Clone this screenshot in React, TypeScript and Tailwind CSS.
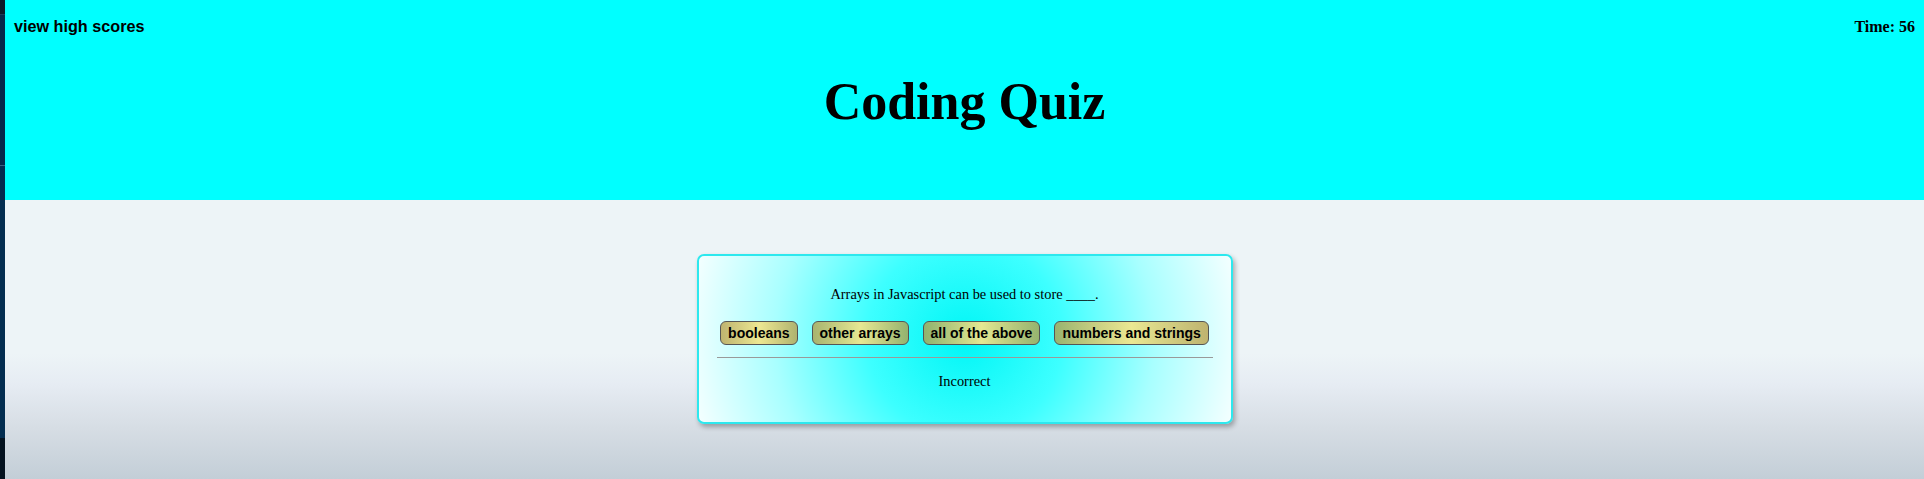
const answers = ['booleans', 'other arrays', 'all of the above', 'numbers and strings'];

export default function App() {
  return (
    <div className="flex min-h-screen w-full">
      {/* left edge of the neighbouring window */}
      <div className="flex w-[5px] shrink-0 flex-col">
        <div className="h-[14px] bg-[#0c1a29]"></div>
        <div className="h-px bg-[#1f3b57]"></div>
        <div className="h-[150px] bg-[#06294a]"></div>
        <div className="h-px bg-[#3b6182]"></div>
        <div className="h-[272px] bg-[#032d50]"></div>
        <div className="flex-1 bg-[#04121f]"></div>
      </div>

      <div className="flex flex-1 flex-col">
        {/* Header */}
        <header className="h-[200px] bg-[#00ffff]">
          <div className="flex items-start justify-between px-[9px] pt-[17px]">
            <a className="font-['Liberation_Sans',Arial,sans-serif] text-[16.2px] leading-[19px] font-bold text-black">
              view high scores
            </a>
            <span className="font-['Liberation_Serif','Times_New_Roman',serif] text-[16px] leading-[19px] font-bold text-black">
              Time: 56
            </span>
          </div>
          <h1 className="mt-[40px] text-center font-['Liberation_Serif','Times_New_Roman',serif] text-[52px] leading-none font-bold text-black">
            Coding Quiz
          </h1>
        </header>

        {/* Quiz area */}
        <main className="flex flex-1 flex-col items-center bg-[linear-gradient(to_bottom,#edf4f7_0%,#edf4f7_55%,#e6ecf3_66%,#d6dde4_82%,#c3ced7_100%)]">
          <div className="mt-[54px] w-[536px] rounded-[7px] border-2 border-[#2de8ee] bg-[radial-gradient(circle_at_center,#00f6f6_0%,#3dffff_35%,#a8ffff_68%,#f4ffff_100%)] px-[18px] pt-[30px] pb-[32px] shadow-[2px_3px_5px_rgba(0,0,0,0.3)]">
            <p className="text-center font-['Liberation_Serif','Times_New_Roman',serif] text-[14.4px] leading-[17px] text-black">
              Arrays in Javascript can be used to store ____.
            </p>
            <div className="mt-[18px] flex justify-center gap-[14px]">
              {answers.map((a) => (
                <button
                  key={a}
                  className="h-[24px] shrink-0 rounded-[6px] border border-[#555] bg-[linear-gradient(to_right,rgba(184,154,63,0.75),rgba(240,230,140,0.95)_50%,rgba(184,154,63,0.75))] px-[7px] font-['Liberation_Sans',Arial,sans-serif] text-[14px] leading-none font-bold whitespace-nowrap text-black"
                >
                  {a}
                </button>
              ))}
            </div>
            <hr className="mt-[12px] border-t border-[#9a9a9a]" />
            <p className="mt-[15px] text-center font-['Liberation_Serif','Times_New_Roman',serif] text-[14.4px] leading-[17px] text-black">
              Incorrect
            </p>
          </div>
        </main>
      </div>
    </div>
  );
}
